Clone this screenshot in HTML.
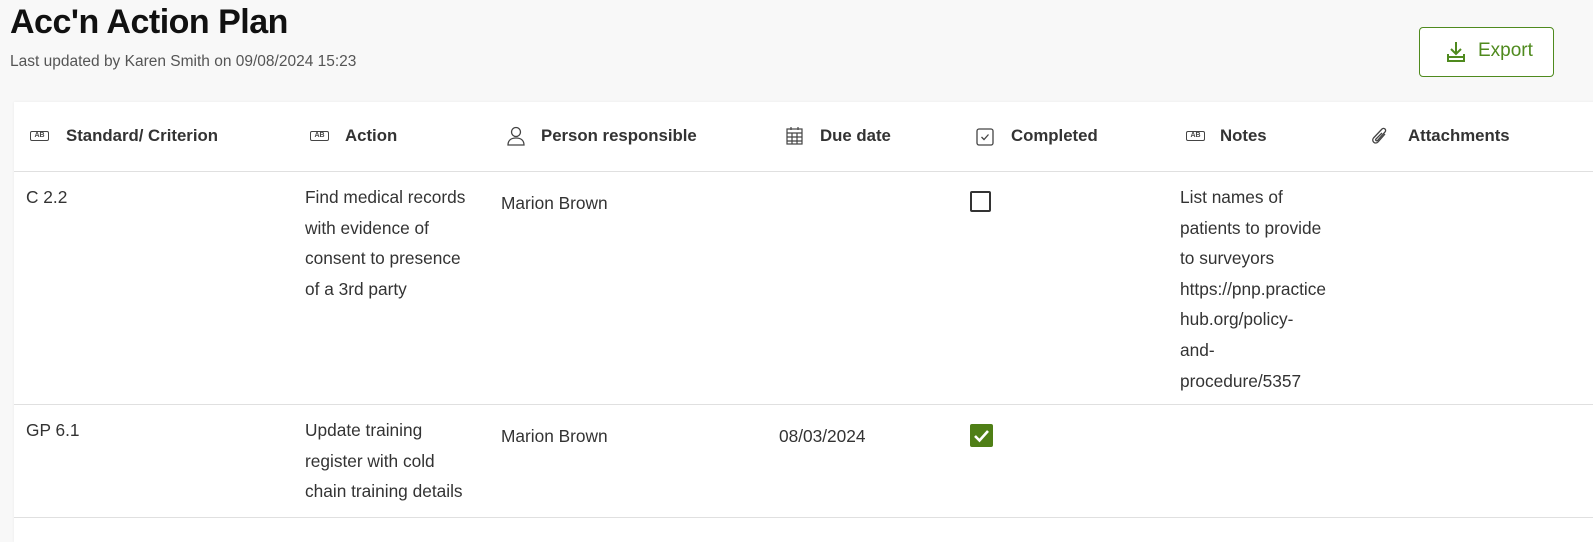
<!DOCTYPE html>
<html><head><meta charset="utf-8"><style>
*{margin:0;padding:0;box-sizing:border-box}
body{width:1593px;height:530px;background:#f8f8f8;font-family:"Liberation Sans",sans-serif;color:#222;overflow:hidden;position:relative}
h1{position:absolute;left:10px;top:3px;font-size:34px;font-weight:bold;color:#111;letter-spacing:-0.5px}
.sub{position:absolute;left:10px;top:53px;font-size:15.5px;color:#555}
.btn{position:absolute;left:1419px;top:27px;width:135px;height:50px;border:1px solid #4f8a1e;border-radius:4px;background:#fff;color:#4f8a1e;font-size:19px}
.btn span{position:absolute;left:58px;top:12px}
.btn svg{position:absolute;left:24px;top:13px}
.card{position:absolute;left:14px;top:102px;width:1600px;height:440px;background:#fff;box-shadow:0 0 3px rgba(0,0,0,.06)}
.line{position:absolute;left:0;width:1600px;height:1px;background:#e0e0e0}
.t{position:absolute;white-space:nowrap;font-size:17.3px;line-height:30.6px;color:#333}
.h{position:absolute;top:24px;font-size:16.8px;font-weight:bold;color:#333;white-space:nowrap}
.ic{position:absolute;top:24px}
.ab{position:absolute;top:29px;width:19px;height:10px;border:1px solid #444;border-radius:2px;font-size:7px;line-height:8px;text-align:center;font-weight:bold;color:#444}
.cb{position:absolute;width:21px;height:21px;border:2px solid #333;border-radius:2px}
</style></head><body>
<h1>Acc'n Action Plan</h1>
<div class="sub">Last updated by Karen Smith on 09/08/2024 15:23</div>
<div class="btn"><svg width="24" height="22" viewBox="0 0 24 22" fill="none" stroke="#4f8a1e" stroke-width="2"><path d="M12 1v12M7 8l5 5 5-5"/><path d="M4 13v7h16v-7"/><path d="M4 16h16"/></svg><span>Export</span></div>
<div class="card">
<div class="ab" style="left:16px">AB</div><div class="h" style="left:52px">Standard/ Criterion</div>
<div class="ab" style="left:296px">AB</div><div class="h" style="left:331px">Action</div>
<svg class="ic" style="left:493px" width="18" height="20" viewBox="0 0 18 20" fill="none" stroke="#444" stroke-width="1.3"><circle cx="9" cy="6" r="4.5"/><path d="M1 19c0-5 3.5-7 8-7s8 2 8 7z"/></svg><div class="h" style="left:527px">Person responsible</div>
<svg class="ic" style="left:772px" width="17" height="19" viewBox="0 0 17 19" fill="none" stroke="#444" stroke-width="1.2"><rect x="1" y="3" width="15" height="15"/><path d="M5 1v3M12 1v3M1 7h15M1 11h15M1 15h15M6 7v11M11 7v11"/></svg><div class="h" style="left:806px">Due date</div>
<svg class="ic" style="left:962px;top:26px" width="18" height="18" viewBox="0 0 18 18" fill="none" stroke="#444" stroke-width="1.3"><rect x="1" y="1" width="16" height="16" rx="2"/><path d="M5.5 9l2.5 2.5 4.5-5"/></svg><div class="h" style="left:997px">Completed</div>
<div class="ab" style="left:1172px">AB</div><div class="h" style="left:1206px">Notes</div>
<svg class="ic" style="left:1357px" width="18" height="20" viewBox="0 0 18 20" fill="none" stroke="#444" stroke-width="1.3"><path d="M14 8l-7 8a3 3 0 01-4.5-4L11 3a2 2 0 013 3l-7.5 8.5a1 1 0 01-1.5-1.5L11 7"/></svg><div class="h" style="left:1394px">Attachments</div>
<div class="line" style="top:69px"></div>
<div class="t" style="left:12px;top:80px">C 2.2</div>
<div class="t" style="left:291px;top:80px">Find medical records<br>with evidence of<br>consent to presence<br>of a 3rd party</div>
<div class="t" style="left:487px;top:86px">Marion Brown</div>
<div class="cb" style="left:956px;top:89px"></div>
<div class="t" style="left:1166px;top:80px">List names of<br>patients to provide<br>to surveyors<br>https://pnp.practice<br>hub.org/policy-<br>and-<br>procedure/5357</div>
<div class="line" style="top:302px"></div>
<div class="t" style="left:12px;top:313px">GP 6.1</div>
<div class="t" style="left:291px;top:313px">Update training<br>register with cold<br>chain training details</div>
<div class="t" style="left:487px;top:319px">Marion Brown</div>
<div class="t" style="left:765px;top:319px">08/03/2024</div>
<svg style="position:absolute;left:956px;top:322px" width="23" height="23" viewBox="0 0 23 23"><rect width="23" height="23" rx="2" fill="#4f7f16"/><path d="M5 12l4.5 4.5L18 7" fill="none" stroke="#fff" stroke-width="2.6"/></svg>
<div class="line" style="top:415px"></div>
</div>
</body></html>
